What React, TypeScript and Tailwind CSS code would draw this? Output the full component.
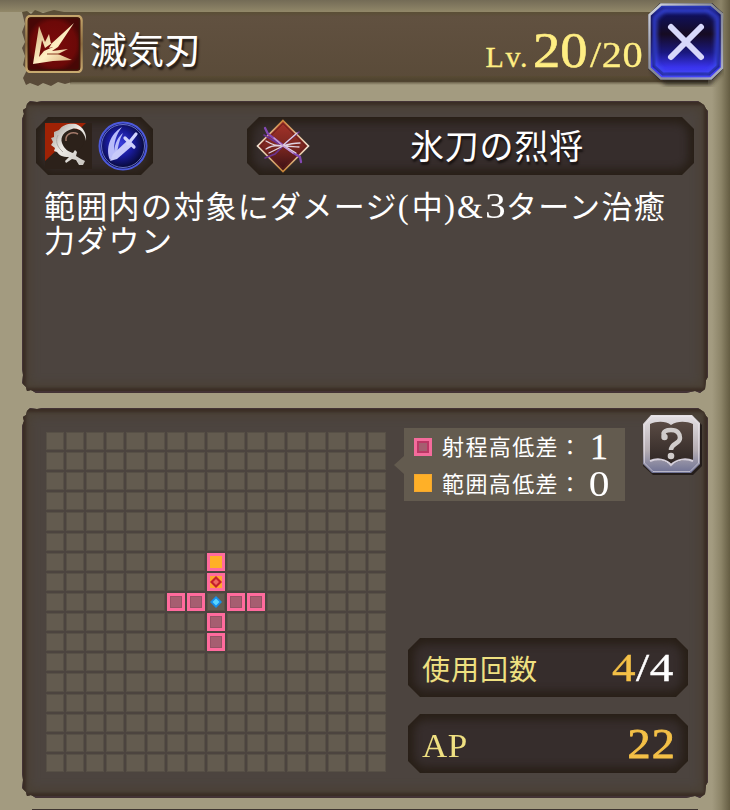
import type { ReactNode } from "react";

const GRID_SIZE = 17;

// row-column keys of the highlighted squares
const CELLS: Record<string, "range" | "area" | "target" | "self"> = {
  "6-8": "area",
  "7-8": "target",
  "8-6": "range",
  "8-7": "range",
  "8-8": "self",
  "8-9": "range",
  "8-10": "range",
  "9-8": "range",
  "10-8": "range",
};

function Pill({ className, children }: { className: string; children: ReactNode }) {
  return (
    <div
      className={`relative bg-[#281f17] [clip-path:polygon(12px_0,calc(100%-12px)_0,100%_12px,100%_calc(100%-12px),calc(100%-12px)_100%,12px_100%,0_calc(100%-12px),0_12px)] ${className}`}
    >
      <div className="absolute inset-[6px] rounded-xl bg-[#362d2c] blur-[4px]" />
      <div className="relative flex h-full items-center">{children}</div>
    </div>
  );
}

function Panel({ className, children }: { className: string; children: ReactNode }) {
  return (
    <section
      className={`w-[686px] border-x border-b-2 border-t border-[#433335] bg-[#4c443f] shadow-[inset_0_0_3px_3px_#3b2d25,inset_0_0_10px_7px_#4a4034] [clip-path:polygon(5px_3px,8px_0,15px_1px,20px_0,calc(100%-10px)_0,calc(100%-7px)_2px,calc(100%-4px)_4px,calc(100%-2px)_8px,100%_10px,100%_calc(100%-16px),calc(100%-2px)_calc(100%-13px),calc(100%-3px)_calc(100%-4px),calc(100%-8px)_100%,calc(100%-13px)_calc(100%-2px),calc(100%-22px)_100%,14px_100%,9px_calc(100%-3px),5px_calc(100%-2px),4px_calc(100%-6px),0_calc(100%-10px),1px_calc(100%-18px),0_calc(100%-24px),0_18px,2px_13px,1px_9px,4px_7px)] ${className}`}
    >
      {children}
    </section>
  );
}

function SkillIcon() {
  return (
    <svg className="h-[58px] w-[58px] shrink-0" viewBox="0 0 58 58">
      <defs>
        <linearGradient id="gold" x1="0" y1="0" x2="0" y2="1">
          <stop offset="0" stopColor="#c5a66c" />
          <stop offset=".5" stopColor="#8c6d40" />
          <stop offset="1" stopColor="#c8aa70" />
        </linearGradient>
        <radialGradient id="red">
          <stop offset="0" stopColor="#7a0a0a" />
          <stop offset=".8" stopColor="#6c0908" />
          <stop offset="1" stopColor="#480706" />
        </radialGradient>
        <linearGradient id="cream" x1="0" y1="0" x2="1" y2="1">
          <stop offset="0" stopColor="#cda878" />
          <stop offset=".55" stopColor="#fff0c4" />
          <stop offset="1" stopColor="#d0a470" />
        </linearGradient>
      </defs>
      <rect x="1.5" y="1" width="55" height="56" rx="4" fill="url(#red)" stroke="url(#gold)" strokeWidth="2.5" />
      <rect x="3.5" y="3" width="51" height="52" rx="3" fill="none" stroke="#3b1409" strokeWidth="1.5" />
      <path
        fillRule="evenodd"
        d="M8 49 14 11 20 27 24 19 26 29 49 8 33 32 27 36 43 34 33 39 47 45 28 46ZM14 42 19 36 28 32 24 33 27 28 20 33 17 25Z"
        fill="url(#cream)"
      />
      <path d="m22 39 13 0" fill="none" stroke="#8a3a20" strokeWidth="1" />
    </svg>
  );
}

function CloseButton() {
  return (
    <button className="-mr-4 ml-[6px] h-[84px] w-[76px] shrink-0">
      <svg viewBox="0 0 76 84" className="h-full w-full">
        <defs>
          <linearGradient id="steel" x1="0" y1="0" x2="1" y2="1">
            <stop offset="0" stopColor="#d9dbe0" />
            <stop offset=".5" stopColor="#85878f" />
            <stop offset="1" stopColor="#b6b8c2" />
          </linearGradient>
          <linearGradient id="blue" x1="0" y1="0" x2="0" y2="1">
            <stop offset="0" stopColor="#2637ba" />
            <stop offset=".15" stopColor="#101058" />
            <stop offset=".4" stopColor="#160b22" />
            <stop offset=".65" stopColor="#1a1880" />
            <stop offset=".85" stopColor="#3a34ee" />
            <stop offset="1" stopColor="#4942fb" />
          </linearGradient>
          <filter id="soft">
            <feGaussianBlur stdDeviation="2" />
          </filter>
        </defs>
        <path d="M15 8H63L74 19V69L63 82H17L4 69V19Z" fill="#201b15" opacity=".7" filter="url(#soft)" />
        <path d="M12 0H64L75 10V66L64 77H12L0 66V12Z" fill="#1d1d29" />
        <path d="M13 1.500H63L74 11V65L63 75.500H13L1.500 65V12Z" fill="url(#blue)" stroke="url(#steel)" strokeWidth="2.5" />
        <path d="M15 6H61L70 14V63L61 71H15L6 63V14Z" fill="none" stroke="#16166c" strokeWidth="3" />
        <path d="M16 7H60L69 15V62L60 71H16L7 62V15Z" fill="none" stroke="#3d4ff0" strokeWidth="4" opacity=".85" filter="url(#soft)" />
        <path d="M23 24 53 54M53 24 23 54" stroke="#d8d8fb" strokeWidth="6" strokeLinecap="round" />
      </svg>
    </button>
  );
}

function CrescentIcon() {
  return (
    <svg className="h-[46px] w-[47px]" viewBox="0 0 47 46">
      <defs>
        <linearGradient id="silver" x1="0" y1="0" x2="1" y2="1">
          <stop offset="0" stopColor="#9a958f" />
          <stop offset=".45" stopColor="#efece8" />
          <stop offset="1" stopColor="#c4c0bb" />
        </linearGradient>
      </defs>
      <path d="M0 0H47V46H0Z" fill="#2c211a" />
      <path d="M0 0H41L0 38Z" fill="#9f2205" />
      <circle cx="27" cy="17" r="12" fill="#2c211a" />
      <path
        d="M41 18C40 10 34 4 27 6 19 8 15 14 17 20 19 26 24 29 28 30L30 27 32 29 31 33 36 36 40 38 38 42 34 42 31 37 27 36 21 40 20 38 24 34C17 34 14 32 12 29L9 28 10 25 6 22 8 19 6 15 9 14 9 9 14 7C18 1 25 0 31 1 38 4 42 10 41 18Z"
        fill="url(#silver)"
      />
      <path d="M21 18C20 11 27 8 33 11" fill="none" stroke="#a37a6a" strokeWidth="1.500" />
      <path d="M13 12C10 18 12 24 18 29" fill="none" stroke="#b0aaa5" strokeWidth="1" />
    </svg>
  );
}

function SlashIcon() {
  return (
    <svg className="h-[50px] w-[50px]" viewBox="0 0 50 50">
      <defs>
        <radialGradient id="orb" cx=".45" cy=".45">
          <stop offset="0" stopColor="#3a3fe0" />
          <stop offset=".55" stopColor="#191b9a" />
          <stop offset="1" stopColor="#080a3e" />
        </radialGradient>
      </defs>
      <circle cx="25" cy="25" r="23.500" fill="url(#orb)" stroke="#4c59dc" strokeWidth="2" />
      <circle cx="25" cy="25" r="21.500" fill="none" stroke="#7f8be0" strokeWidth=".8" />
      <path d="M12 39C7 28 12 13 24 6 18 14 16 21 16 30 17 22 20 16 25 12 21 19 20 26 19 33Z" fill="#b9bcfa" />
      <path d="M12 40 15 33 29 20 34 25 19 38Z" fill="#c8cafa" />
      <path d="M30 23 38 13M27 17 36 26" fill="none" stroke="#d0d2fc" strokeWidth="3.200" strokeLinecap="round" />
    </svg>
  );
}

function UnitIcon() {
  return (
    <svg className="h-[54px] w-[54px] shrink-0" viewBox="0 0 54 54">
      <defs>
        <linearGradient id="gem" x1="0" y1="0" x2="0" y2="1">
          <stop offset="0" stopColor="#a8342a" />
          <stop offset=".55" stopColor="#76251f" />
          <stop offset="1" stopColor="#371014" />
        </linearGradient>
        <linearGradient id="gem-edge" x1="0" y1="0" x2="0" y2="1">
          <stop offset="0" stopColor="#cb8539" />
          <stop offset=".5" stopColor="#f3e6d6" />
          <stop offset="1" stopColor="#c48236" />
        </linearGradient>
      </defs>
      <path d="M27 1.500 52.500 27 27 52.500 1.500 27Z" fill="url(#gem)" stroke="url(#gem-edge)" strokeWidth="1.600" />
      <path d="M27 4.500 49.500 27 27 49.500 4.500 27Z" fill="none" stroke="#641b19" />
      <g fill="none" strokeLinecap="round">
        <path d="M9 9 12 15 20 21 36 33 44 38 45 43" stroke="#8449b4" strokeWidth="2.300" />
        <path d="M8 16 23 25M43 13 32 22 19 35 9 39" stroke="#6b3291" strokeWidth="1.600" />
        <path d="M10 22C15 25 21 27 26 27 33 25 38 24 44 24M10 30C16 26 22 26 28 27 34 27 39 28 43 28M13 34 25 28 41 14M30 28 40 34" stroke="#dfd2df" strokeWidth="1.300" />
        <path d="m18 19 9 8 10 7" stroke="#c49bd2" strokeWidth="1.500" />
      </g>
    </svg>
  );
}

function HelpButton() {
  return (
    <button className="ml-[17px] mt-[-1px] h-[62px] w-[60px]">
      <svg viewBox="0 0 60 62" className="h-full w-full">
        <defs>
          <linearGradient id="frame" x1="0" y1="0" x2="0" y2="1">
            <stop offset="0" stopColor="#e5e1e4" />
            <stop offset=".6" stopColor="#b6aeb3" />
            <stop offset="1" stopColor="#6e7194" />
          </linearGradient>
          <linearGradient id="page" x1="0" y1="0" x2="0" y2="1">
            <stop offset="0" stopColor="#5a4b44" />
            <stop offset="1" stopColor="#2c2422" />
          </linearGradient>
        </defs>
        <path d="M11 2H52L60 10V51L51 60H11L1 51V12Z" fill="#241d1b" />
        <path d="M9 0H50L58 8V49L49 58H10L1 49V9Z" fill="url(#frame)" />
        <path d="M10 1.500H49L56.500 9V48L48 56.500H11L2.500 48V10Z" fill="none" stroke="#eeeaf0" opacity=".55" />
        <path d="M8 9C15 6 24 6 29 10 35 6 44 6 51 9V46C45 44 35 45 29 51 24 45 15 44 8 46Z" fill="url(#page)" />
        <path d="M8 46C15 43 24 44 29 50 35 44 44 43 51 46" fill="none" stroke="#d4cfdb" strokeWidth="2" />
        <path d="M22 21C20 16 25 15 29 15 36 15 38 19 38 23 38 29 29 28 29 35" fill="none" stroke="#d0cccb" strokeWidth="4.500" />
        <circle cx="22.500" cy="22" r="3.200" fill="#d0cccb" />
        <circle cx="29" cy="41" r="3.300" fill="#d0cccb" />
      </svg>
    </button>
  );
}

function Cell({ kind }: { kind?: string }) {
  if (kind === "self") {
    return (
      <div className="flex items-center justify-center border border-[#595146] bg-[#645c50]">
        <svg className="h-3 w-3 shrink-0" viewBox="0 0 12 12">
          <path d="m6 0 6 6-6 6-6-6Z" fill="#168ee9" />
          <path d="m6 2.500 3.500 3.500L6 9.500 2.500 6Z" fill="#58d5ff" />
        </svg>
      </div>
    );
  }
  if (kind === "range") {
    return <div className="border-[3px] border-[#ff6b9d] bg-[#a65e70] shadow-[inset_0_0_0_1px_#965365]" />;
  }
  if (kind === "area") {
    return <div className="border-[3px] border-[#ff6b9d] bg-[#ffb027]" />;
  }
  if (kind === "target") {
    return (
      <div className="flex items-center justify-center border-[3px] border-[#ff6b9d] bg-[#ffa52d]">
        <svg className="h-3 w-3 shrink-0" viewBox="0 0 12 12">
          <path d="m6 0 6 6-6 6-6-6Z" fill="#c51f2a" />
          <path d="m6 3 3 3-3 3-3-3Z" fill="#f16860" />
        </svg>
      </div>
    );
  }
  return <div className="border border-[#575046] bg-[#635b4f]" />;
}

function RangeGrid() {
  return (
    <div className="mt-[16px] grid h-[340px] w-[340px] shrink-0 grid-cols-[repeat(17,minmax(0,1fr))] grid-rows-[repeat(17,minmax(0,1fr))] gap-[2px]">
      {Array.from({ length: GRID_SIZE * GRID_SIZE }, (_, i) => (
        <Cell key={i} kind={CELLS[`${Math.floor(i / GRID_SIZE)}-${i % GRID_SIZE}`]} />
      ))}
    </div>
  );
}

export default function App() {
  return (
    <main className="relative h-[810px] w-[730px] overflow-hidden bg-[#a39b80] pl-[22px] font-['Noto_Sans_CJK_JP',sans-serif] text-white">
      {/* Parchment edge shading */}
      <div className="absolute left-0 top-0 h-3 w-full bg-linear-to-b from-[#736b56] to-[#928869]" />
      <div className="absolute right-0 top-0 h-full w-[18px] bg-linear-to-r from-transparent via-[#8c8468] to-[#655d43]" />

      {/* Header */}
      <header className="relative flex h-[101px] w-[686px] items-start pt-[3px]">
        <div className="absolute inset-x-0 top-[9px] h-[78px] bg-linear-to-b from-[#5b4f37] from-5% via-[#615140] via-10% to-[#594a38] [clip-path:polygon(0_3px,5px_2px,9px_5px,13px_1px,21px_4px,32px_1px,42px_3px,100%_3px,100%_73px,50px_73px,43px_75px,36px_73px,29px_77px,21px_74px,16px_77px,8px_74px,4px_76px,1px_69px,5px_61px,1px_56px,3px_47px,0_39px,3px_33px,0_23px,3px_15px)]" />
        <div className="absolute left-12 right-0 top-[76px] h-[9px] bg-linear-to-b from-[#594b34] via-[#4e432f] to-transparent" />
        <div className="relative ml-[3px] mt-[12px]">
          <SkillIcon />
        </div>
        <h1 className="relative ml-[7px] mt-[17px] whitespace-nowrap text-[37px] leading-[56px] [text-shadow:2px_3px_2px_#251c16]">滅気刃</h1>
        <div className="relative ml-auto mt-[15px] flex items-baseline whitespace-nowrap font-['Liberation_Serif',serif] leading-[64px] text-[#ffee83]">
          <span className="mr-1 text-[30px] tracking-[1.500px] [-webkit-text-stroke:0.3px_#ffee83]">Lv.</span>
          <span className="inline-block w-[57px] origin-left scale-x-[1.09] text-[50px] [-webkit-text-stroke:0.6px_#ffee83]">20</span>
          <span className="inline-block w-[52px] origin-left scale-x-[1.12] text-[36px] tracking-[0.5px] [-webkit-text-stroke:0.3px_#ffee83]">/20</span>
        </div>
        <div className="relative">
          <CloseButton />
        </div>
      </header>

      {/* Description */}
      <Panel className="relative h-[292px]">
        <div className="flex justify-between px-[13px] pt-[15px]">
          <Pill className="h-[58px] w-[117px]">
            <div className="flex items-center gap-[6px] pl-[9px]">
              <CrescentIcon />
              <SlashIcon />
            </div>
          </Pill>
          <Pill className="h-[58px] w-[447px]">
            <div className="flex items-center pl-[9px]">
              <UnitIcon />
              <span className="ml-[100px] mt-[-2px] whitespace-nowrap text-[34px] leading-none tracking-[0.8px] [text-shadow:1px_3px_2px_#171211]">氷刀の烈将</span>
            </div>
          </Pill>
        </div>
        <div className="whitespace-nowrap pl-[21px] pt-[13px] text-[31px] leading-[34px] tracking-[1.300px]">
          <p className="flex h-[34px] items-baseline">
            <span>範囲内の対象にダメージ</span>
            <span className="w-[14px] font-['Liberation_Serif',serif] text-[33px]">(</span>
            <span>中</span>
            <span className="w-[13px] font-['Liberation_Serif',serif] text-[33px]">)</span>
            <span className="w-[28px] font-['Liberation_Serif',serif] text-[33px]">&amp;</span>
            <span className="w-[21px] origin-left scale-x-[1.15] font-['Liberation_Serif',serif] text-[36px]">3</span>
            <span>ターン治癒</span>
          </p>
          <p>力ダウン</p>
        </div>
      </Panel>

      {/* Range and cost */}
      <Panel className="relative mt-[15px] flex h-[390px] pl-[23px] pt-[7px]">
        <RangeGrid />
        <div className="ml-[18px] w-[304px] shrink-0">
          <div className="flex">
            <div className="relative mt-[12px] flex h-[73px] w-[221px] shrink-0 flex-col bg-[#635b4f]">
              <div className="absolute -left-[10px] top-[28px] h-[18px] w-[10px] bg-[#635b4f] [clip-path:polygon(100%_0,0_50%,100%_100%)]" />
              <div className="flex h-[37px] items-center pl-[10px]">
                <span className="h-[18px] w-[18px] border-[3px] border-[#f46b9b] bg-[#a65e70] shadow-[inset_0_0_0_2px_#bb3865]" />
                <span className="ml-[10px] mt-[-2px] w-[140px] whitespace-nowrap text-[22px] tracking-[1.400px]">射程高低差：</span>
                <span className="w-[34px] text-center font-['Liberation_Serif',serif] text-[36px] leading-none [-webkit-text-stroke:0.3px_white]">1</span>
              </div>
              <div className="flex h-[36px] items-center pl-[10px]">
                <span className="h-[18px] w-[18px] border border-[#f5a82e] bg-[#ffb027]" />
                <span className="ml-[10px] mt-[-2px] w-[140px] whitespace-nowrap text-[22px] tracking-[1.400px]">範囲高低差：</span>
                <span className="mt-[2px] w-[34px] scale-x-[1.15] text-center font-['Liberation_Serif',serif] text-[36px] leading-none">0</span>
              </div>
            </div>
            <HelpButton />
          </div>
          <div className="ml-[4px] mt-[137px] flex w-[280px] flex-col gap-[17px]">
            <Pill className="h-[59px]">
              <div className="flex w-full items-center justify-between pl-[14px] pr-[14px]">
                <span className="text-[28px] tracking-[1px] text-[#efe081]">使用回数</span>
                <span className="origin-right scale-x-[1.15] font-['Liberation_Serif',serif] text-[41px] leading-none tracking-[0.5px] [-webkit-text-stroke-width:0.4px]">
                  <span className="text-[#f4c047]">4</span>/4
                </span>
              </div>
            </Pill>
            <Pill className="h-[59px]">
              <div className="flex w-full items-center justify-between pl-[14px] pr-[12px] font-['Liberation_Serif',serif]">
                <span className="origin-left scale-x-[1.06] pt-[6px] text-[33px] leading-none tracking-[0.5px] text-[#efe081]">AP</span>
                <span className="origin-right scale-x-[1.1] text-[42px] leading-none tracking-[1px] text-[#f4c047] [-webkit-text-stroke:0.8px_#f4c047]">22</span>
              </div>
            </Pill>
          </div>
        </div>
      </Panel>

      {/* Top edge of the following panel */}
      <div className="relative ml-[10px] mt-[11px] h-[2px] w-[666px] bg-[#3e3530]" />
    </main>
  );
}
